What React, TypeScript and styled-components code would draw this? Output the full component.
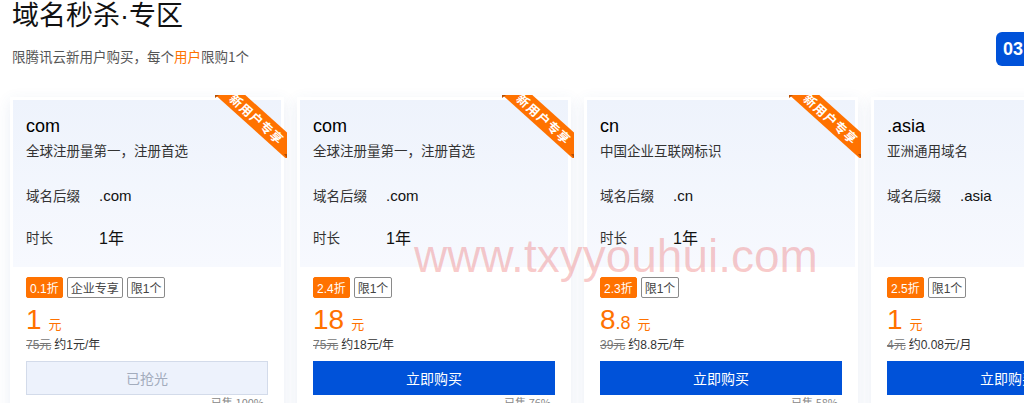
import React from "react";
import styled, { createGlobalStyle } from "styled-components";

const Global = createGlobalStyle`
  html, body { margin: 0; padding: 0; background: #fff; }
  body { font-family: "Liberation Sans", "Noto Sans CJK SC", sans-serif; overflow: hidden; }
  * { box-sizing: border-box; }
`;

const Page = styled.div`
  position: relative;
  width: 1024px;
  height: 403px;
  overflow: hidden;
  background: #fff;
`;

const Header = styled.div`
  display: flex;
  width: 1200px;
`;

const HeadText = styled.div`
  flex: 0 0 996px;
  padding-left: 12px;
`;

const Title = styled.h1`
  margin: 0;
  font-size: 27px;
  line-height: 32px;
  font-weight: 400;
  color: #111;
  font-family: "Liberation Sans", "Noto Sans CJK SC", sans-serif;
`;

const Sub = styled.p`
  margin: 14px 0 0;
  font-size: 13.5px;
  line-height: 20px;
  color: #555;
  font-family: "Noto Sans CJK SC", sans-serif;
`;

const Hl = styled.span`
  color: #ff7200;
`;

const Countdown = styled.div`
  display: flex;
  align-items: center;
  gap: 6px;
  margin-top: 32px;
  height: 34px;
`;

const TimeBox = styled.span`
  display: inline-flex;
  align-items: center;
  justify-content: center;
  height: 34px;
  padding: 0 7px;
  border-radius: 6px;
  background: #0052d9;
  color: #fff;
  font-size: 18px;
  font-weight: 700;
`;

const Cards = styled.div`
  display: flex;
  gap: 13px;
  padding-left: 10px;
  margin-top: 31px;
  width: 1400px;
`;

const Card = styled.div`
  position: relative;
  flex: 0 0 274px;
  height: 340px;
  background: #fff;
  padding: 3px;
  box-shadow: 0 4px 14px rgba(60, 100, 170, 0.1);
`;

const Top = styled.div`
  height: 167px;
  padding: 14px 13px 0;
  background: linear-gradient(180deg, #eef3fc 0%, #f7f9fe 100%);
`;

const Name = styled.div`
  font-size: 18px;
  line-height: 24px;
  color: #000;
`;

const Desc = styled.div`
  margin-top: 2px;
  font-size: 13.5px;
  line-height: 20px;
  color: #333;
  font-family: "Noto Sans CJK SC", sans-serif;
`;

const Row = styled.div<{ $mt: number }>`
  display: flex;
  align-items: center;
  margin-top: ${(p) => p.$mt}px;
  height: 22px;
`;

const Label = styled.span`
  width: 73px;
  font-size: 13.5px;
  color: #333;
  font-family: "Noto Sans CJK SC", sans-serif;
`;

const Value = styled.span<{ $size: number }>`
  font-size: ${(p) => p.$size}px;
  color: #111;
  font-family: "Liberation Sans", "Noto Sans CJK SC", sans-serif;
`;

const Body = styled.div`
  padding: 10px 13px 0;
`;

const Tags = styled.div`
  display: flex;
  gap: 4px;
`;

const Tag = styled.span<{ $hot?: boolean }>`
  display: inline-flex;
  align-items: center;
  height: 21px;
  padding: 0 3px;
  font-size: 12px;
  border-radius: 2px;
  font-family: "Liberation Sans", "Noto Sans CJK SC", sans-serif;
  color: ${(p) => (p.$hot ? "#fff" : "#444")};
  background: ${(p) => (p.$hot ? "#ff7200" : "#fff")};
  border: 1px solid ${(p) => (p.$hot ? "#ff7200" : "#8a8a8a")};
`;

const Price = styled.div`
  display: flex;
  align-items: baseline;
  margin-top: 7px;
  height: 30px;
  color: #ff7200;
`;

const Big = styled.span`
  font-size: 28px;
  line-height: 30px;
`;

const Dec = styled.span`
  font-size: 18px;
`;

const Unit = styled.span`
  margin-left: 7px;
  font-size: 13px;
  font-family: "Noto Sans CJK SC", sans-serif;
`;

const Orig = styled.div`
  font-size: 12px;
  line-height: 20px;
  color: #333;
  font-family: "Liberation Sans", "Noto Sans CJK SC", sans-serif;
`;

const Strike = styled.s`
  color: #777;
  margin-right: 3px;
`;

const Btn = styled.button<{ $off?: boolean }>`
  display: block;
  width: 100%;
  height: 34px;
  margin-top: 6px;
  font-size: 14px;
  font-family: "Noto Sans CJK SC", sans-serif;
  cursor: pointer;
  color: ${(p) => (p.$off ? "#a3acbd" : "#fff")};
  background: ${(p) => (p.$off ? "#edf2fc" : "#0052d9")};
  border: 1px solid ${(p) => (p.$off ? "#d3dbea" : "#0052d9")};
`;

const Sold = styled.div`
  margin-top: 0;
  text-align: right;
  padding-right: 4px;
  font-size: 11px;
  line-height: 14px;
  color: #888;
  font-family: "Noto Sans CJK SC", sans-serif;
`;

const Ribbon = styled.div`
  position: absolute;
  top: -2px;
  right: -3px;
  width: 72px;
  height: 63px;
  overflow: hidden;
  pointer-events: none;
`;

const Band = styled.span`
  position: absolute;
  left: -14px;
  top: 14px;
  width: 112px;
  height: 20px;
  line-height: 20px;
  text-align: center;
  transform: rotate(42deg);
  background: #ff7200;
  color: #fff;
  font-size: 12.5px;
  font-weight: 700;
  letter-spacing: 1px;
  font-family: "Noto Sans CJK SC", sans-serif;
`;

const FoldTop = styled.span`
  position: absolute;
  left: 0;
  top: 0;
  width: 0;
  height: 0;
  border-style: solid;
  border-width: 3px 4px 0 0;
  border-color: #b94f00 transparent transparent transparent;
`;

const FoldRight = styled.span`
  position: absolute;
  right: 0;
  bottom: 0;
  width: 0;
  height: 0;
  border-style: solid;
  border-width: 0 3px 4px 0;
  border-color: transparent #b94f00 transparent transparent;
`;

const Watermark = styled.div`
  position: absolute;
  left: 414px;
  top: 231px;
  font-size: 46px;
  line-height: 50px;
  color: rgba(232, 70, 70, 0.28);
  font-family: "Liberation Sans", sans-serif;
  pointer-events: none;
  white-space: nowrap;
`;

type Item = {
  name: string;
  desc: string;
  suffix: string;
  year?: string;
  tags: string[];
  price: string;
  dec?: string;
  orig: string;
  per: string;
  off?: boolean;
  ribbon: boolean;
  sold: string;
};

const items: Item[] = [
  { name: "com", desc: "全球注册量第一，注册首选", suffix: ".com", year: "1年", tags: ["0.1折", "企业专享", "限1个"], price: "1", orig: "75元", per: "约1元/年", off: true, ribbon: true, sold: "已售 100%" },
  { name: "com", desc: "全球注册量第一，注册首选", suffix: ".com", year: "1年", tags: ["2.4折", "限1个"], price: "18", orig: "75元", per: "约18元/年", ribbon: true, sold: "已售 76%" },
  { name: "cn", desc: "中国企业互联网标识", suffix: ".cn", year: "1年", tags: ["2.3折", "限1个"], price: "8", dec: ".8", orig: "39元", per: "约8.8元/年", ribbon: true, sold: "已售 58%" },
  { name: ".asia", desc: "亚洲通用域名", suffix: ".asia", tags: ["2.5折", "限1个"], price: "1", orig: "4元", per: "约0.08元/月", ribbon: false, sold: "已售 32%" },
];

export default function App() {
  return (
    <Page>
      <Global />
      <Header>
        <HeadText>
          <Title>域名秒杀·专区</Title>
          <Sub>
            限腾讯云新用户购买，每个<Hl>用户</Hl>限购1个
          </Sub>
        </HeadText>
        <Countdown>
          <TimeBox>03</TimeBox>
        </Countdown>
      </Header>
      <Cards>
        {items.map((it, i) => (
          <Card key={i}>
            {it.ribbon && (
              <Ribbon>
                <Band>新用户专享</Band>
                <FoldTop />
                <FoldRight />
              </Ribbon>
            )}
            <Top>
              <Name>{it.name}</Name>
              <Desc>{it.desc}</Desc>
              <Row $mt={24}>
                <Label>域名后缀</Label>
                <Value $size={15}>{it.suffix}</Value>
              </Row>
              {it.year && (
                <Row $mt={20}>
                  <Label>时长</Label>
                  <Value $size={16}>{it.year}</Value>
                </Row>
              )}
            </Top>
            <Body>
              <Tags>
                {it.tags.map((t, j) => (
                  <Tag key={j} $hot={j === 0}>
                    {t}
                  </Tag>
                ))}
              </Tags>
              <Price>
                <Big>{it.price}</Big>
                {it.dec && <Dec>{it.dec}</Dec>}
                <Unit>元</Unit>
              </Price>
              <Orig>
                <Strike>{it.orig}</Strike>
                {it.per}
              </Orig>
              <Btn $off={it.off}>{it.off ? "已抢光" : "立即购买"}</Btn>
              <Sold>{it.sold}</Sold>
            </Body>
          </Card>
        ))}
      </Cards>
      <Watermark>www.txyyouhui.com</Watermark>
    </Page>
  );
}
